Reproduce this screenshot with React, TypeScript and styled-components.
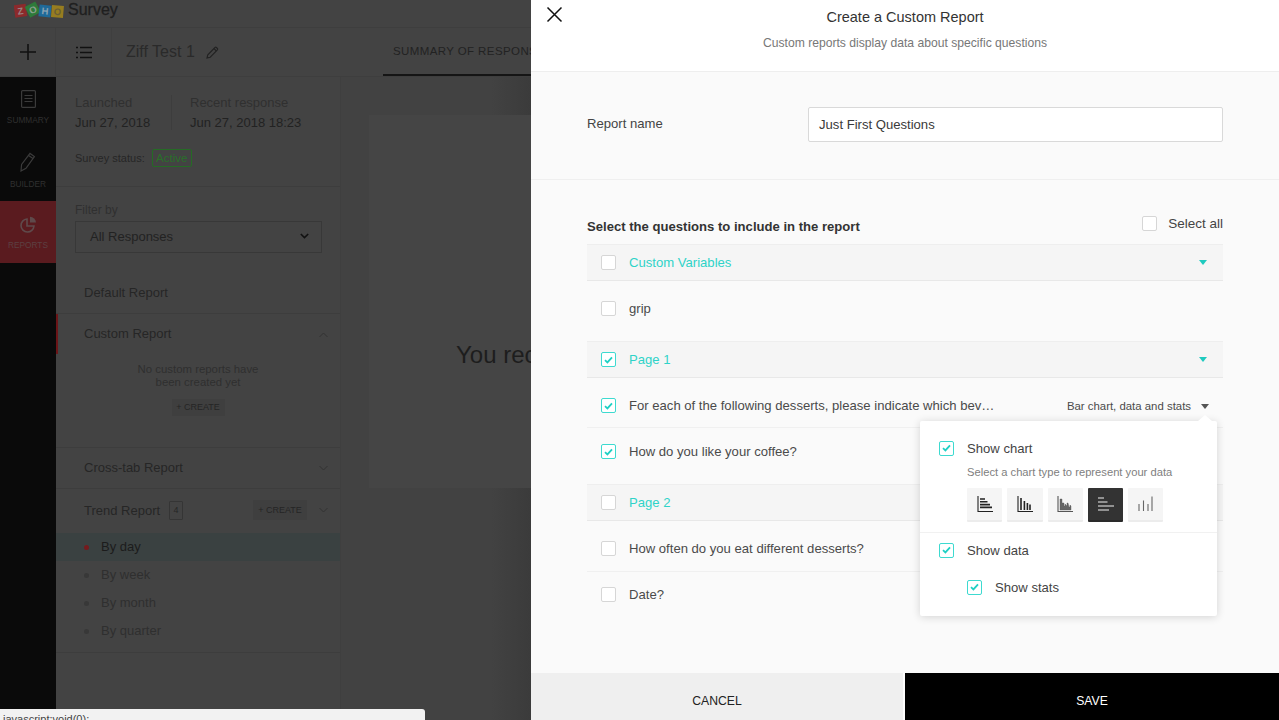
import React from "react";
import styled, { createGlobalStyle } from "styled-components";

const Global = createGlobalStyle`
  html, body { margin: 0; padding: 0; height: 100%; overflow: hidden; }
  body { font-family: "Liberation Sans", Arial, sans-serif; background: #434343; }
  * { box-sizing: border-box; }
`;

const Page = styled.div`
  position: relative;
  display: flex;
  width: 1279px;
  height: 720px;
  overflow: hidden;
`;

/* ---------- dimmed application behind the panel ---------- */
const Backdrop = styled.div`
  width: 531px;
  flex: none;
  display: flex;
  flex-direction: column;
  overflow: hidden;
  background: #434343;
  color: #262626;
`;
const BrandBar = styled.div`
  height: 28px;
  flex: none;
  display: flex;
  align-items: flex-start;
  padding: 1px 0 0 14px;
  gap: 4px;
  border-bottom: 1px solid #3e3e3e;
`;
const BrandName = styled.span`
  font-size: 16px;
  line-height: 18px;
  color: #1f1f1f;
  -webkit-text-stroke: 0.3px #1f1f1f;
`;
const Toolbar = styled.div`
  height: 49px;
  flex: none;
  display: flex;
  border-bottom: 1px solid #3e3e3e;
`;
const ToolCell = styled.div`
  width: 56px;
  flex: none;
  display: flex;
  align-items: center;
  justify-content: center;
  border-right: 1px solid #3f3f3f;
  color: #111;
`;
const TitleCell = styled.div`
  width: 271px;
  flex: none;
  display: flex;
  align-items: center;
  gap: 11px;
  padding-left: 14px;
  font-size: 16px;
  color: #2a2a2a;
`;
const Tab = styled.div`
  flex: none;
  width: 300px;
  padding: 17px 0 0 10px;
  font-size: 11.5px;
  letter-spacing: 0.4px;
  white-space: nowrap;
  color: #222;
  border-bottom: 2px solid #151515;
`;
const Body = styled.div`
  flex: 1;
  display: flex;
  min-height: 0;
`;
const Rail = styled.nav`
  width: 56px;
  flex: none;
  background: #0a0a0a;
  display: flex;
  flex-direction: column;
`;
const RailItem = styled.div<{ $active?: boolean }>`
  height: 62px;
  display: flex;
  flex-direction: column;
  align-items: center;
  padding-top: ${(p) => (p.$active ? 15 : 13)}px;
  gap: 7px;
  font-size: 8.3px;
  color: ${(p) => (p.$active ? "#5c4042" : "#303030")};
  background: ${(p) => (p.$active ? "#5a1b1f" : "transparent")};
`;
const Sidebar = styled.aside`
  width: 285px;
  flex: none;
  display: flex;
  flex-direction: column;
  border-right: 1px solid #3f3f3f;
`;
const InfoBlock = styled.div`
  height: 110px;
  flex: none;
  padding: 18px 0 0 19px;
  border-bottom: 1px solid #3d3d3d;
`;
const InfoRow = styled.div`
  display: flex;
`;
const InfoCol = styled.div<{ $divider?: boolean }>`
  display: flex;
  flex-direction: column;
  gap: 5px;
  font-size: 13px;
  line-height: 15px;
  ${(p) => (p.$divider ? "margin-left: 18px;" : "width: 97px; border-right: 1px solid #3d3d3d;")}
`;
const InfoLabel = styled.span`
  color: #303030;
`;
const InfoValue = styled.span`
  color: #222;
`;
const StatusRow = styled.div`
  display: flex;
  align-items: center;
  gap: 7px;
  margin-top: 19px;
  font-size: 11px;
  color: #262626;
`;
const ActiveBadge = styled.span`
  height: 18px;
  width: 40px;
  display: flex;
  align-items: center;
  justify-content: center;
  border: 1px solid #256b25;
  border-radius: 2px;
  font-size: 11.5px;
  color: #2a702a;
`;
const FilterBlock = styled.div`
  height: 84px;
  flex: none;
  padding: 16px 0 0 19px;
`;
const FilterLabel = styled.div`
  font-size: 12px;
  line-height: 14px;
  margin-bottom: 4px;
  color: #303030;
`;
const SelectBox = styled.div`
  width: 247px;
  height: 32px;
  display: flex;
  align-items: center;
  justify-content: space-between;
  padding: 0 12px 2px 14px;
  border: 1px solid #383838;
  font-size: 13px;
  color: #222;
`;
const ReportRow = styled.div<{ $h: number; $mark?: boolean; $lift?: boolean }>`
  height: ${(p) => p.$h}px;
  flex: none;
  display: flex;
  align-items: center;
  padding: 0 12px ${(p) => (p.$lift ? 2 : 0)}px 28px;
  font-size: 13px;
  color: #262626;
  ${(p) => (p.$mark ? "box-shadow: inset 2px 0 0 #6b1518;" : "")}
`;
const ReportRule = styled.div`
  height: 1px;
  flex: none;
  background: #3d3d3d;
`;
const Push = styled.span`
  flex: 1;
`;
const RowChevron = styled.span<{ $drop?: number; $gap?: number }>`
  display: flex;
  margin-top: ${(p) => p.$drop ?? 0}px;
  margin-left: ${(p) => p.$gap ?? 0}px;
`;
const EmptyBlock = styled.div`
  height: 93px;
  flex: none;
  display: flex;
  flex-direction: column;
  align-items: center;
  padding-top: 9px;
  font-size: 11.4px;
  line-height: 13px;
  text-align: center;
  color: #2f2f2f;
`;
const CreateSpacer = styled.span`
  height: 10px;
  flex: none;
`;
const CreateButton = styled.span<{ $tall?: boolean }>`
  height: ${(p) => (p.$tall ? 20 : 17)}px;
  width: ${(p) => (p.$tall ? 54 : 53)}px;
  display: flex;
  align-items: center;
  justify-content: center;
  background: #3f3f3f;
  font-size: 9px;
  color: #252525;
`;
const CountBadge = styled.span`
  width: 14px;
  height: 19px;
  margin-left: 9px;
  display: flex;
  align-items: center;
  justify-content: center;
  border: 1px solid #353535;
  border-radius: 1px;
  font-size: 9px;
`;
const SubItem = styled.div<{ $active?: boolean }>`
  height: 28px;
  flex: none;
  display: flex;
  align-items: center;
  gap: 12px;
  padding: 0 0 2px 28px;
  font-size: 13px;
  color: ${(p) => (p.$active ? "#1c1c1c" : "#2f2f2f")};
  background: ${(p) => (p.$active ? "#3a4141" : "transparent")};
`;
const Dot = styled.span<{ $active?: boolean }>`
  width: 5px;
  height: 5px;
  margin-top: 2px;
  border-radius: 50%;
  background: ${(p) => (p.$active ? "#751a1d" : "#383838")};
`;
const SideEnd = styled.div`
  height: 8px;
  flex: none;
  border-bottom: 1px solid #3d3d3d;
`;
const Main = styled.main`
  flex: 1;
  min-width: 0;
  overflow: hidden;
  padding: 38px 0 0 28px;
  background: linear-gradient(90deg, #424242 0, #424242 150px, #3b3b3b 190px);
`;
const MainCard = styled.div`
  width: 400px;
  height: 373px;
  padding: 226px 0 0 87px;
  background: #454545;
  font-size: 24px;
  line-height: 28px;
  color: #1d1d1d;
  white-space: nowrap;
`;
const StatusTip = styled.div`
  position: absolute;
  left: 0;
  bottom: 0;
  width: 425px;
  height: 11px;
  padding: 4px 0 0 3px;
  background: #f2f2f2;
  border-top-right-radius: 3px;
  font-size: 11px;
  line-height: 13px;
  color: #444;
  overflow: hidden;
`;

/* ---------- custom report panel ---------- */
const Panel = styled.section`
  width: 748px;
  flex: none;
  display: flex;
  flex-direction: column;
  background: #fafafa;
`;
const PanelHeader = styled.header`
  position: relative;
  height: 72px;
  flex: none;
  display: flex;
  flex-direction: column;
  align-items: center;
  padding-top: 9px;
  background: #fff;
  border-bottom: 1px solid #eee;
`;
const CloseButton = styled.span`
  position: absolute;
  left: 15px;
  top: 6px;
  display: flex;
  color: #111;
`;
const PanelTitle = styled.h1`
  margin: 0;
  font-size: 14.5px;
  line-height: 17px;
  font-weight: 400;
  color: #333;
`;
const PanelSub = styled.p`
  margin: 10px 0 0;
  font-size: 12.15px;
  line-height: 15px;
  color: #777;
`;
const NameSection = styled.div`
  height: 108px;
  flex: none;
  display: flex;
  padding: 35px 56px 0;
  border-bottom: 1px solid #efefef;
`;
const NameLabel = styled.label`
  width: 221px;
  flex: none;
  font-size: 13.1px;
  line-height: 34px;
  color: #444;
`;
const NameField = styled.div`
  flex: 1;
  height: 35px;
  padding-left: 10px;
  background: #fff;
  border: 1px solid #d9d9d9;
  border-radius: 2px;
  font-size: 13.1px;
  line-height: 33px;
  color: #3a3a3a;
`;
const QuestionSection = styled.div`
  flex: 1;
  min-height: 0;
  padding: 0 56px;
`;
const ListHead = styled.div`
  height: 64px;
  display: flex;
  justify-content: space-between;
  padding-top: 36px;
`;
const ListTitle = styled.h2`
  margin: 1px 0 0;
  font-size: 13.1px;
  line-height: 20px;
  font-weight: 700;
  color: #333;
`;
const SelectAll = styled.div`
  display: flex;
  gap: 11px;
  height: 15px;
  align-items: center;
  font-size: 13.5px;
  line-height: 15px;
  color: #444;
`;
const GroupRow = styled.div`
  height: 37px;
  display: flex;
  align-items: center;
  gap: 13px;
  padding: 0 16px 0 14px;
  background: #f5f5f5;
  border-top: 1px solid #eee;
  border-bottom: 1px solid #e8e8e8;
  font-size: 13.1px;
  color: #2fd3c8;
`;
const QuestionRow = styled.div<{ $h: number; $top: number; $rule?: boolean }>`
  height: ${(p) => p.$h}px;
  display: flex;
  align-items: flex-start;
  gap: 13px;
  padding: ${(p) => p.$top}px 14px 0 14px;
  font-size: 13.1px;
  line-height: 15px;
  color: #4a4a4a;
  ${(p) => (p.$rule ? "border-bottom: 1px solid #f0f0f0;" : "")}
`;
const QuestionText = styled.span`
  white-space: nowrap;
`;
const ChartPicker = styled.span`
  display: flex;
  align-items: center;
  gap: 10px;
  margin-left: auto;
  margin-top: 1px;
  font-size: 11.4px;
  color: #4a4a4a;
`;
const Caret = styled.span<{ $teal?: boolean }>`
  width: 0;
  height: 0;
  margin-left: auto;
  border-left: 4.5px solid transparent;
  border-right: 4.5px solid transparent;
  border-top: 5px solid ${(p) => (p.$teal ? "#1fcabf" : "#555")};
`;
const PickerCaret = styled(Caret)`
  margin-left: 0;
`;
const Box = styled.span<{ $on?: boolean }>`
  width: 15px;
  height: 15px;
  flex: none;
  display: flex;
  align-items: center;
  justify-content: center;
  background: #fff;
  border: ${(p) => (p.$on ? "1.5px solid #3ddad0" : "1px solid #d6d6d6")};
  border-radius: 2px;
`;
const Footer = styled.footer`
  height: 47px;
  flex: none;
  display: flex;
  gap: 2px;
  background: #fff;
`;
const CancelButton = styled.button`
  width: 372px;
  border: 0;
  background: #efefef;
  font: 12.2px "Liberation Sans", Arial, sans-serif;
  color: #222;
  padding: 8px 0 0;
`;
const SaveButton = styled.button`
  flex: 1;
  border: 0;
  background: #000;
  font: 12.2px "Liberation Sans", Arial, sans-serif;
  color: #fff;
  padding: 8px 0 0;
`;

/* ---------- chart options popover ---------- */
const Popover = styled.div`
  position: absolute;
  left: 920px;
  top: 421px;
  width: 297px;
  height: 195px;
  background: #fff;
  border-radius: 2px;
  box-shadow: 0 1px 8px rgba(0, 0, 0, 0.16);
  &::before {
    content: "";
    position: absolute;
    right: 5px;
    top: -6px;
    border-left: 7px solid transparent;
    border-right: 7px solid transparent;
    border-bottom: 6px solid #fff;
  }
`;
const ChartBlock = styled.div`
  height: 112px;
  padding: 19px 0 0 19px;
  border-bottom: 1px solid #f1f1f1;
`;
const DataBlock = styled.div`
  padding: 9px 0 0 19px;
`;
const OptionRow = styled.div<{ $nested?: boolean }>`
  display: flex;
  align-items: center;
  gap: 13px;
  height: 16px;
  font-size: 13.1px;
  color: #444;
  ${(p) => (p.$nested ? "margin: 21px 0 0 28px;" : "")}
`;
const OptionHint = styled.div`
  margin: 9px 0 0 28px;
  font-size: 11.2px;
  line-height: 14px;
  color: #808080;
`;
const ChartTypes = styled.div`
  display: flex;
  gap: 5px;
  margin: 9px 0 0 28px;
`;
const ChartType = styled.span<{ $active?: boolean }>`
  width: 35.3px;
  height: 34px;
  display: flex;
  align-items: center;
  justify-content: center;
  border-radius: 1px;
  background: ${(p) => (p.$active ? "#333" : "#f5f5f5")};
  border-bottom: 2px solid ${(p) => (p.$active ? "#2a2a2a" : "#ececec")};
`;

/* ---------- drawings ---------- */
const Check = () => (
  <svg width="9" height="8" viewBox="0 0 9 8" fill="none">
    <path d="M1 4.2 3.4 6.4 8 1.4" stroke="#1fd0c4" strokeWidth="1.8" />
  </svg>
);
const CheckBox = ({ on }: { on?: boolean }) => <Box $on={on}>{on && <Check />}</Box>;

const ZohoLogo = () => (
  <svg width="50" height="18" viewBox="0 0 50 18" fontFamily="Liberation Sans" fontWeight="700" fontSize="9.5" textAnchor="middle">
    <g transform="rotate(-8 6 10)">
      <rect x="0.5" y="3.5" width="12" height="12.5" fill="#8c2a2c" />
      <text x="6.5" y="13.5" fill="#9a8384">Z</text>
    </g>
    <g transform="rotate(-28 19 9)">
      <rect x="13" y="2.5" width="12" height="12" fill="#2e7a3a" />
      <text x="19" y="12" fill="#8ba08f">O</text>
    </g>
    <g transform="rotate(6 31 10)">
      <rect x="25" y="4" width="12" height="12" fill="#1f6a99" />
      <text x="31" y="13.5" fill="#8aa2b2">H</text>
    </g>
    <g transform="rotate(5 43 10)">
      <rect x="37.5" y="4.5" width="12" height="12" fill="#977d20" />
      <text x="43.5" y="14" fill="#6b5f35">O</text>
    </g>
  </svg>
);
const PlusIcon = () => (
  <svg width="16" height="16" viewBox="0 0 16 16" stroke="#111" strokeWidth="1.6">
    <path d="M8 0v16M0 8h16" />
  </svg>
);
const ListIcon = () => (
  <svg width="16" height="13" viewBox="0 0 16 13" stroke="#111" strokeWidth="1.6">
    <path d="M4 1.5h12M4 6.5h12M4 11.5h12M0 1.5h2M0 6.5h2M0 11.5h2" />
  </svg>
);
const TitlePencil = () => (
  <svg width="13" height="13" viewBox="0 0 13 13" fill="none" stroke="#222" strokeWidth="1.1">
    <path d="M1 12 1.8 8.8 9 1.5a1 1 0 0 1 1.4 0l1 1a1 1 0 0 1 0 1.4L4.2 11.2Z" />
    <path d="M8 2.6l2.4 2.4" />
  </svg>
);
const DocIcon = () => (
  <svg width="15" height="18" viewBox="0 0 15 18" fill="none" stroke="#3b3b3b" strokeWidth="1.2">
    <rect x="0.6" y="0.6" width="13.8" height="16.8" rx="1" />
    <path d="M3.5 5.5h8M3.5 8.5h8M3.5 11.5h8" />
  </svg>
);
const BuilderIcon = () => (
  <svg width="16" height="20" viewBox="0 0 16 20" fill="none" stroke="#3b3b3b" strokeWidth="1.2">
    <path d="M1 19 1.6 12.5 10 1.4l4.4 3.2L6 16.4Z" />
    <path d="M8.6 3.4l4.4 3.2" />
  </svg>
);
const PieIcon = () => (
  <svg width="17" height="17" viewBox="0 0 17 17" fill="none" stroke="#5f4a4b" strokeWidth="1.6">
    <path d="M7 3a6.5 6.5 0 1 0 7 7H7Z" />
    <path d="M10 .8V6.5h6A6 6 0 0 0 10 .8Z" fill="#5f4a4b" stroke="none" />
  </svg>
);
const Chevron = ({ up, color = "#333" }: { up?: boolean; color?: string }) => (
  <svg width="9" height="6" viewBox="0 0 9 6" fill="none" stroke={color} strokeWidth="1">
    <path d={up ? "M.5 5 4.5 1l4 4" : "M.5 1l4 4 4-4"} />
  </svg>
);
const SelectChevron = () => (
  <svg width="9" height="6" viewBox="0 0 9 6" fill="none" stroke="#111" strokeWidth="1.6">
    <path d="M.8 1l3.7 3.6L8.2 1" />
  </svg>
);
const CloseIcon = () => (
  <svg width="17" height="17" viewBox="0 0 17 17" stroke="#111" strokeWidth="1.5">
    <path d="M1.5 1.5l14 14M15.5 1.5l-14 14" />
  </svg>
);
const ChartBarH = () => (
  <svg width="16" height="16" viewBox="0 0 16 16" fill="none" stroke="#222">
    <path d="M1 0v15.5h15" strokeWidth="1.1" />
    <path d="M3 3h5M3 5.8h7.5M3 8.6h10M3 11.4h12" strokeWidth="1.6" />
  </svg>
);
const ChartBarV = () => (
  <svg width="16" height="16" viewBox="0 0 16 16" fill="none" stroke="#222">
    <path d="M1 0v15.5h15" strokeWidth="1.1" />
    <path d="M4 2v12M7.4 5v9M10.4 7v7M13 8.5V14" strokeWidth="1.6" />
  </svg>
);
const ChartArea = () => (
  <svg width="16" height="16" viewBox="0 0 16 16" fill="none" stroke="#555">
    <path d="M1 0v15.5h15" strokeWidth="1.1" />
    <path d="M3 14V3h2v4h2v3h1V8l2 2V7h1l1 4h1V9l1 1v4Z" fill="#666" strokeWidth=".4" />
  </svg>
);
const ChartLines = () => (
  <svg width="16" height="14" viewBox="0 0 16 14" fill="none" stroke="#f0f0f0" strokeWidth="1.2">
    <path d="M0 1h6M0 5h9.5M0 9h16M0 13h11" />
  </svg>
);
const ChartSticks = () => (
  <svg width="15" height="16" viewBox="0 0 15 16" fill="none" stroke="#666" strokeWidth="1.1">
    <path d="M1 15V8M5.5 15V4.5M10 15V8M14 15V.5" />
  </svg>
);

export default function App() {
  return (
    <Page>
      <Global />
      <Backdrop>
        <BrandBar>
          <ZohoLogo />
          <BrandName>Survey</BrandName>
        </BrandBar>
        <Toolbar>
          <ToolCell><PlusIcon /></ToolCell>
          <ToolCell><ListIcon /></ToolCell>
          <TitleCell>Ziff Test 1 <TitlePencil /></TitleCell>
          <Tab>SUMMARY OF RESPONSES</Tab>
        </Toolbar>
        <Body>
          <Rail>
            <RailItem><DocIcon />SUMMARY</RailItem>
            <RailItem><BuilderIcon />BUILDER</RailItem>
            <RailItem $active><PieIcon />REPORTS</RailItem>
          </Rail>
          <Sidebar>
            <InfoBlock>
              <InfoRow>
                <InfoCol>
                  <InfoLabel>Launched</InfoLabel>
                  <InfoValue>Jun 27, 2018</InfoValue>
                </InfoCol>
                <InfoCol $divider>
                  <InfoLabel>Recent response</InfoLabel>
                  <InfoValue>Jun 27, 2018 18:23</InfoValue>
                </InfoCol>
              </InfoRow>
              <StatusRow>Survey status: <ActiveBadge>Active</ActiveBadge></StatusRow>
            </InfoBlock>
            <FilterBlock>
              <FilterLabel>Filter by</FilterLabel>
              <SelectBox>All Responses <SelectChevron /></SelectBox>
            </FilterBlock>
            <ReportRow $h={42}>Default Report</ReportRow>
            <ReportRule />
            <ReportRow $h={40} $mark $lift>
              Custom Report<Push /><RowChevron $drop={4}><Chevron up /></RowChevron>
            </ReportRow>
            <EmptyBlock>
              No custom reports have
              <br />
              been created yet
              <CreateSpacer />
              <CreateButton>+ CREATE</CreateButton>
            </EmptyBlock>
            <ReportRule />
            <ReportRow $h={40} $lift>
              Cross-tab Report<Push /><RowChevron $drop={2}><Chevron /></RowChevron>
            </ReportRow>
            <ReportRule />
            <ReportRow $h={44} $lift>
              Trend Report
              <CountBadge>4</CountBadge>
              <Push />
              <CreateButton $tall>+ CREATE</CreateButton>
              <RowChevron $gap={12}><Chevron /></RowChevron>
            </ReportRow>
            <SubItem $active><Dot $active />By day</SubItem>
            <SubItem><Dot />By week</SubItem>
            <SubItem><Dot />By month</SubItem>
            <SubItem><Dot />By quarter</SubItem>
            <SideEnd />
          </Sidebar>
          <Main>
            <MainCard>You rec</MainCard>
          </Main>
        </Body>
      </Backdrop>
      <StatusTip>javascript:void(0);</StatusTip>

      <Panel>
        <PanelHeader>
          <CloseButton><CloseIcon /></CloseButton>
          <PanelTitle>Create a Custom Report</PanelTitle>
          <PanelSub>Custom reports display data about specific questions</PanelSub>
        </PanelHeader>
        <NameSection>
          <NameLabel>Report name</NameLabel>
          <NameField>Just First Questions</NameField>
        </NameSection>
        <QuestionSection>
          <ListHead>
            <ListTitle>Select the questions to include in the report</ListTitle>
            <SelectAll><CheckBox />Select all</SelectAll>
          </ListHead>
          <GroupRow><CheckBox />Custom Variables<Caret $teal /></GroupRow>
          <QuestionRow $h={60} $top={20}><CheckBox /><QuestionText>grip</QuestionText></QuestionRow>
          <GroupRow><CheckBox on />Page 1<Caret $teal /></GroupRow>
          <QuestionRow $h={50} $top={20} $rule>
            <CheckBox on />
            <QuestionText>For each of the following desserts, please indicate which bev…</QuestionText>
            <ChartPicker>Bar chart, data and stats <PickerCaret /></ChartPicker>
          </QuestionRow>
          <QuestionRow $h={56} $top={16}><CheckBox on /><QuestionText>How do you like your coffee?</QuestionText></QuestionRow>
          <GroupRow><CheckBox />Page 2</GroupRow>
          <QuestionRow $h={51} $top={20} $rule><CheckBox /><QuestionText>How often do you eat different desserts?</QuestionText></QuestionRow>
          <QuestionRow $h={50} $top={15}><CheckBox /><QuestionText>Date?</QuestionText></QuestionRow>
        </QuestionSection>
        <Footer>
          <CancelButton>CANCEL</CancelButton>
          <SaveButton>SAVE</SaveButton>
        </Footer>
      </Panel>

      <Popover>
        <ChartBlock>
          <OptionRow><CheckBox on />Show chart</OptionRow>
          <OptionHint>Select a chart type to represent your data</OptionHint>
          <ChartTypes>
            <ChartType><ChartBarH /></ChartType>
            <ChartType><ChartBarV /></ChartType>
            <ChartType><ChartArea /></ChartType>
            <ChartType $active><ChartLines /></ChartType>
            <ChartType><ChartSticks /></ChartType>
          </ChartTypes>
        </ChartBlock>
        <DataBlock>
          <OptionRow><CheckBox on />Show data</OptionRow>
          <OptionRow $nested><CheckBox on />Show stats</OptionRow>
        </DataBlock>
      </Popover>
    </Page>
  );
}
